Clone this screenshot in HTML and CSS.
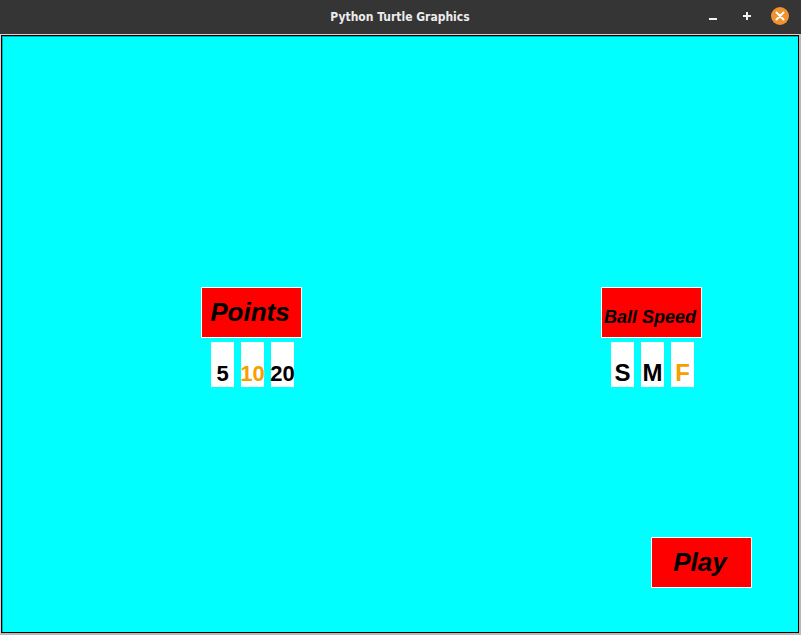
FILE: index.html
```html
<!DOCTYPE html>
<html>
<head>
<meta charset="utf-8">
<title>Python Turtle Graphics</title>
<link rel="stylesheet" href="styles.css">
</head>
<body>
<div class="window">
  <header class="titlebar">
    <div class="title">Python Turtle Graphics</div>
    <div class="controls">
      <svg class="ctl min" width="12" height="12" viewBox="0 0 12 12"><rect x="2" y="8" width="8" height="2" fill="#f2f2f2"/></svg>
      <svg class="ctl max" width="12" height="12" viewBox="0 0 12 12"><rect x="2" y="5" width="8" height="2" fill="#f2f2f2"/><rect x="5" y="2" width="2" height="8" fill="#f2f2f2"/></svg>
      <svg class="close" width="20" height="20" viewBox="0 0 20 20"><circle cx="10" cy="10" r="9" fill="#f0922f"/><path d="M6.5 6.5 L13.5 13.5 M13.5 6.5 L6.5 13.5" stroke="#fff" stroke-width="2" stroke-linecap="round"/></svg>
    </div>
  </header>
  <div class="frame">
    <div class="canvas">
      <div class="group points">
        <div class="label">Points</div>
        <div class="cells">
          <div class="cell num">5</div>
          <div class="cell num sel">10</div>
          <div class="cell num">20</div>
        </div>
      </div>
      <div class="group speed">
        <div class="label small">Ball Speed</div>
        <div class="cells">
          <div class="cell let">S</div>
          <div class="cell let">M</div>
          <div class="cell let sel">F</div>
        </div>
      </div>
      <div class="group play">
        <div class="label">Play</div>
      </div>
    </div>
  </div>
</div>
</body>
</html>
```
FILE: styles.css
```css
* { box-sizing: border-box; }
html, body { margin: 0; padding: 0; }
body { width: 801px; height: 635px; overflow: hidden; background: #353535; font-family: "Liberation Sans", Arial, sans-serif; }
.window { width: 801px; height: 635px; display: flex; flex-direction: column; }
.titlebar { height: 34px; background: #353535; position: relative; display: flex; align-items: center; justify-content: center; }
.title { font-family: "DejaVu Sans Condensed", "DejaVu Sans", sans-serif; font-stretch: condensed; font-weight: bold; font-size: 12px; color: #ececec; margin-top: -1px; margin-left: -1px; }
.controls { position: absolute; right: 11px; top: 6px; display: flex; align-items: center; }
.ctl { display: block; }
.max { margin-left: 22px; }
.close { display: block; margin-left: 17px; }
.frame { flex: 1; background: #d6d6d6; border-top: 1px solid #d6d6d6; border-left: 1px solid #d6d6d6; border-right: 2px solid #b8b8b8; border-bottom: 2px solid #b8b8b8; }
.canvas { width: 100%; height: 100%; background: #00ffff; border: 1px solid #000; box-shadow: inset 1px 1px 0 #00b0b0; position: relative; }
.group { position: absolute; display: flex; flex-direction: column; }
.points { left: 199px; top: 251px; }
.speed { left: 599px; top: 251px; }
.play { left: 649px; top: 501px; }
.label { width: 101px; height: 51px; background: #ff0000; border: 1px solid #fff; text-align: center; font-style: italic; font-weight: bold; font-size: 26px; line-height: 26px; padding-top: 11px; padding-right: 3px; color: #000; white-space: nowrap; }
.label.small { font-size: 18px; line-height: 18px; padding-top: 20px; }
.cells { display: flex; gap: 7px; padding-left: 10px; margin-top: 4px; }
.cell { width: 23px; height: 45px; background: #fff; display: flex; justify-content: center; font-weight: bold; color: #000; white-space: nowrap; }
.num { font-size: 22px; line-height: 22px; padding-top: 21px; }
.let { font-size: 24px; line-height: 24px; padding-top: 19px; }
.sel { color: #f5a000; }
```
